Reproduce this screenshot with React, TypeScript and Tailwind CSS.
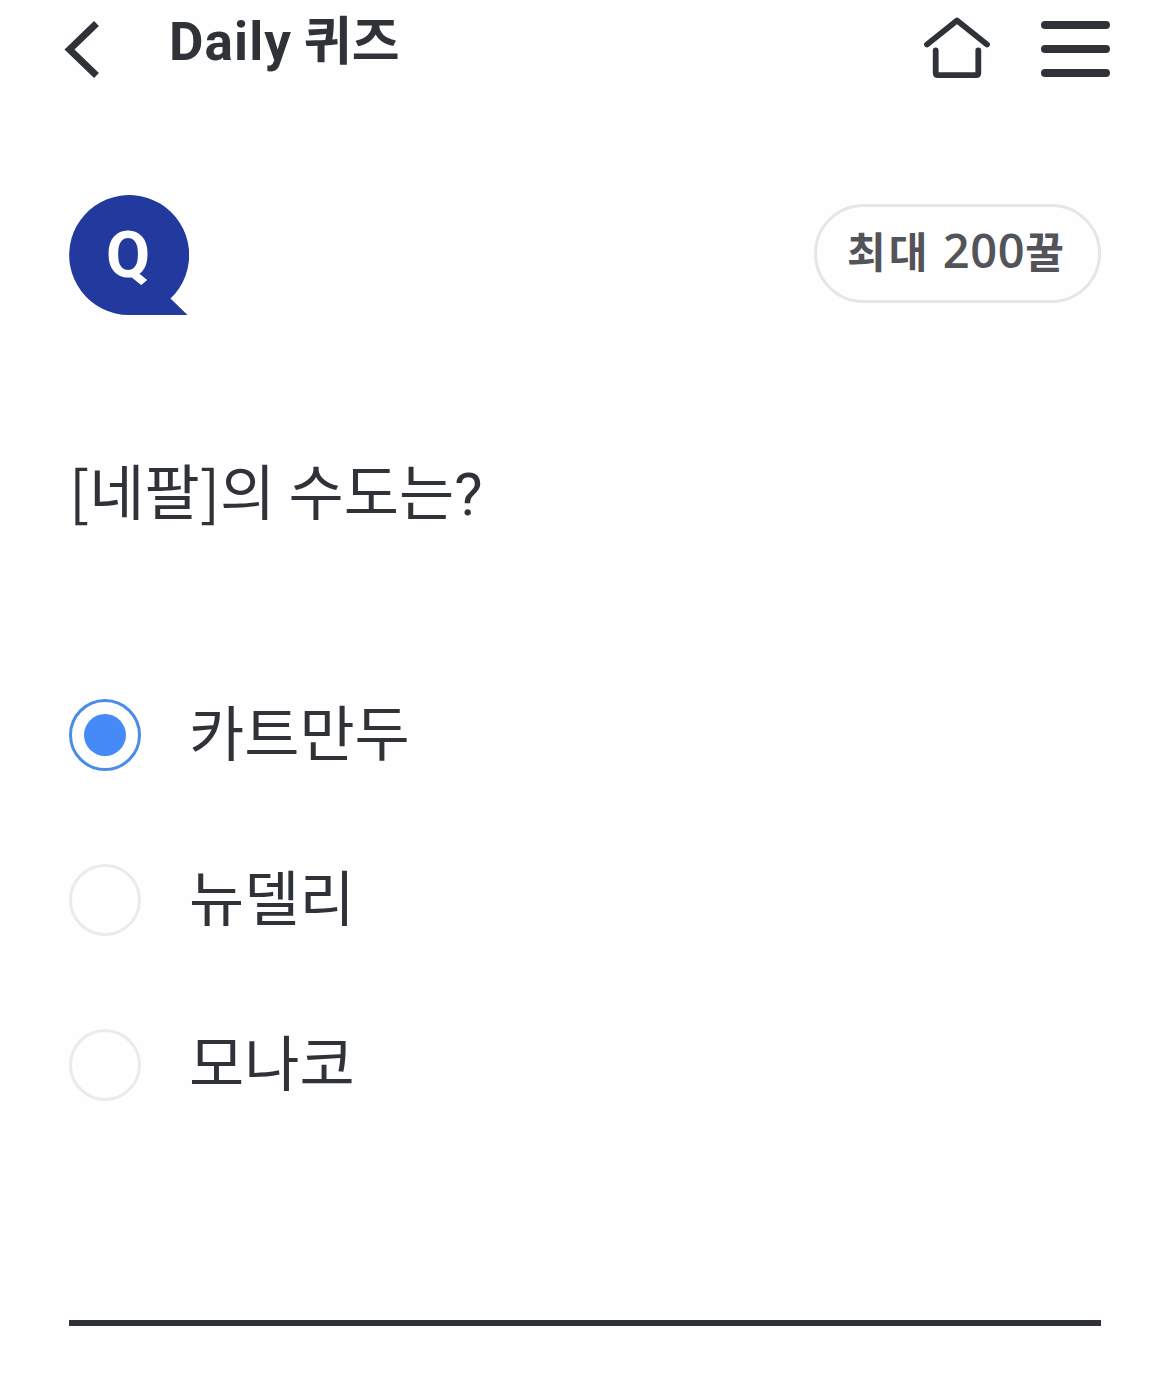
import React from 'react';

const options = ['카트만두', '뉴델리', '모나코'];

const BackIcon = () => (
  <svg className="w-[36px] h-[60px]" viewBox="0 0 36 60" fill="none">
    <path d="M32.5 3.5L5.5 29.5L32.5 55.5" stroke="#2f3237" strokeWidth="7" />
  </svg>
);

const HomeIcon = () => (
  <svg className="w-[68px] h-[64px]" viewBox="0 0 68 64" fill="none" stroke="#2f3237" strokeWidth="5.8" strokeLinecap="round" strokeLinejoin="round">
    <path d="M4 28.5L34 4.5L64 28.5" />
    <path d="M12.7 34.5V57Q12.7 59.2 15 59.2H53Q55.3 59.2 55.3 57V34.5" />
  </svg>
);

const QuizBadge = () => (
  <div className="relative w-[120px] h-[120px]">
    <svg className="w-[120px] h-[120px]" viewBox="0 0 120 120">
      <path d="M60 120A60 60 0 1 1 101.5 103.5L118.5 120Z" fill="#223a9e" />
    </svg>
    <span className="absolute left-[37px] top-[16px] text-[64px] leading-[90px] font-bold text-white font-['Roboto',sans-serif]">Q</span>
  </div>
);

const App = () => {
  return (
    <div className="w-[1170px] h-[1375px] bg-[#fefefe] text-[#2f3237] font-['Noto_Sans_CJK_KR',sans-serif] overflow-hidden">
      <header className="flex items-start h-[195px] pl-[64px] pr-[60px]">
        <button className="mt-[20px]"><BackIcon /></button>
        <h1 className="ml-[69px] text-[52px] leading-[75px] font-bold whitespace-nowrap">
          <span className="font-['Roboto'] text-[53px] tracking-[1.1px]">Daily</span> 퀴즈
        </h1>
        <div className="ml-auto flex items-start">
          <button className="mt-[16px] mr-[50px]"><HomeIcon /></button>
          <button className="mt-[21px] flex flex-col gap-[16.5px]">
            <span className="block w-[69px] h-[7.5px] rounded-full bg-[#2f3237]" />
            <span className="block w-[69px] h-[7.5px] rounded-full bg-[#2f3237]" />
            <span className="block w-[69px] h-[7.5px] rounded-full bg-[#2f3237]" />
          </button>
        </div>
      </header>

      <main className="mx-[69px]">
        <div className="flex items-start justify-between h-[250px]">
          <QuizBadge />
          <div className="mt-[9px] w-[287px] h-[99px] rounded-[50px] border-3 border-[#e4e6eb] pl-[30px] text-[#535459] text-[42px] leading-[86px] font-bold whitespace-nowrap">
            <span className="tracking-[3px]">최대 </span>
            <span className="font-['Open_Sans'] font-semibold text-[47px] tracking-[0.6px]">200</span>
            <span>꿀</span>
          </div>
        </div>

        <p className="h-[254px] text-[60px] leading-[88px] whitespace-nowrap">
          [네팔]의 수도는<span className="font-['Roboto']">?</span>
        </p>

        <ul className="flex flex-col gap-[93px]">
          {options.map((option, i) => (
            <li key={option} className="flex items-center h-[72px]">
              {i === 0 ? (
                <span className="flex items-center justify-center w-[72px] h-[72px] rounded-full border-3 border-[#4a8ce8]">
                  <span className="w-[42px] h-[42px] rounded-full bg-[#448bf8]" />
                </span>
              ) : (
                <span className="w-[72px] h-[72px] rounded-full border-3 border-[#ebebed]" />
              )}
              <span className="ml-[48px] pb-[10px] text-[60px] leading-[72px]">{option}</span>
            </li>
          ))}
        </ul>

        <div className="mt-[219px] h-[6px] bg-[#2f3237]" />
      </main>
    </div>
  );
};

export default App;
